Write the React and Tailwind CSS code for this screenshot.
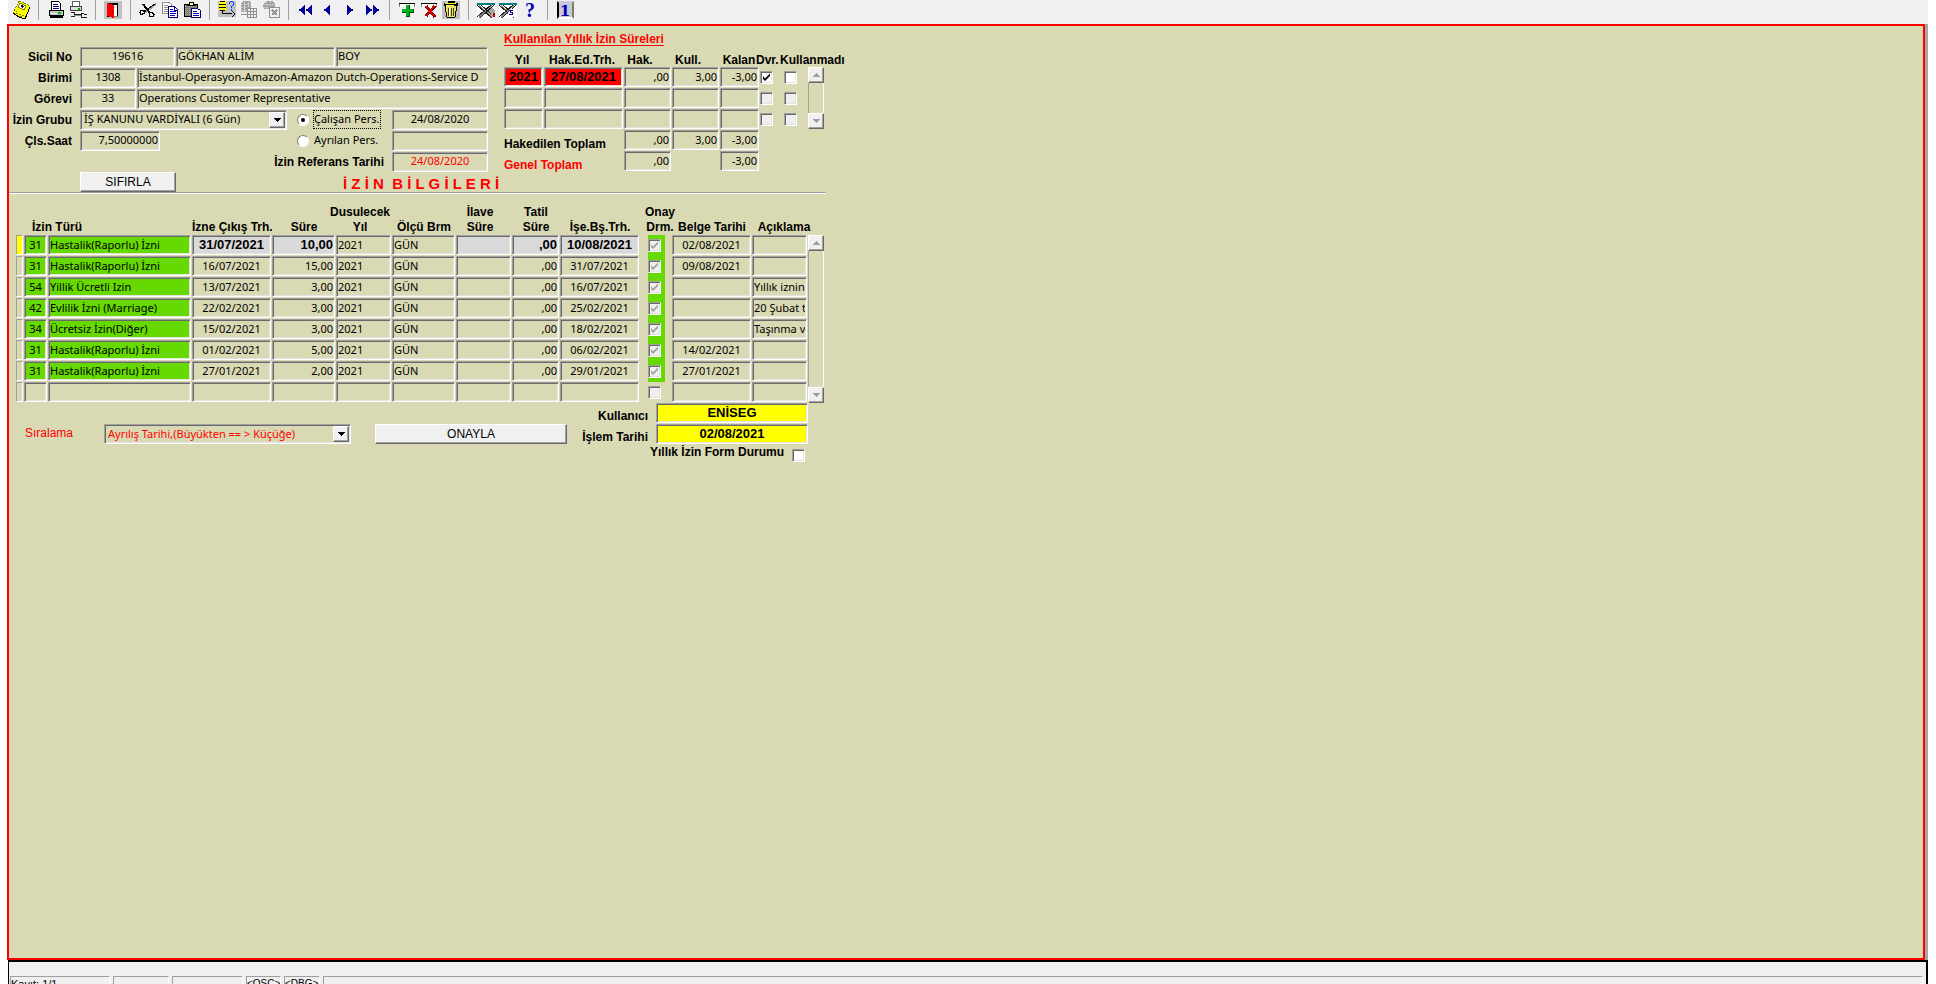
import React from "react";

const SUNKEN =
  "border border-t-[#a0a0a0] border-l-[#a0a0a0] border-r-white border-b-white shadow-[inset_1px_1px_0_#696969,inset_-1px_-1px_0_#e3e3e3]";
const RAISED =
  "border border-t-white border-l-white border-r-[#696969] border-b-[#696969] shadow-[inset_-1px_-1px_0_#a0a0a0] bg-[#f0f0f0]";
const BODY = "font-['Noto_Sans','Open_Sans',sans-serif] text-[11px] font-normal";
const STRONG = "font-['Liberation_Sans',Arial,sans-serif] text-[13px] font-bold";

const leaves = [
  ["31", "Hastalik(Raporlu) İzni", "31/07/2021", "10,00", "2021", "GÜN", ",00", "10/08/2021", "02/08/2021", ""],
  ["31", "Hastalik(Raporlu) İzni", "16/07/2021", "15,00", "2021", "GÜN", ",00", "31/07/2021", "09/08/2021", ""],
  ["54", "Yillik Ücretli Izin", "13/07/2021", "3,00", "2021", "GÜN", ",00", "16/07/2021", "", "Yıllık iznin"],
  ["42", "Evlilik İzni (Marriage)", "22/02/2021", "3,00", "2021", "GÜN", ",00", "25/02/2021", "", "20 Şubat t"],
  ["34", "Ücretsiz İzin(Diğer)", "15/02/2021", "3,00", "2021", "GÜN", ",00", "18/02/2021", "", "Taşınma v"],
  ["31", "Hastalik(Raporlu) İzni", "01/02/2021", "5,00", "2021", "GÜN", ",00", "06/02/2021", "14/02/2021", ""],
  ["31", "Hastalik(Raporlu) İzni", "27/01/2021", "2,00", "2021", "GÜN", ",00", "29/01/2021", "27/01/2021", ""],
  ["", "", "", "", "", "", "", "", "", ""],
];

function Field({ label, id, value = "", align = "text-left", bg = "bg-transparent", color = "text-black", strong = false, width = "w-full" }) {
  return (
    <input
      id={id}
      aria-label={id ? undefined : label}
      readOnly
      value={value}
      className={`block h-5 min-w-0 rounded-none px-px pb-0.5 outline-none ${SUNKEN} ${strong ? STRONG : BODY} ${align} ${bg} ${color} ${width}`}
    />
  );
}

function Check({ label, id, checked = false, disabled = false }) {
  return (
    <span className="grid size-[13px]">
      <input
        id={id}
        type="checkbox"
        aria-label={id ? undefined : label}
        defaultChecked={checked}
        disabled={disabled}
        className={`peer size-[13px] appearance-none bg-white disabled:bg-[#f0f0f0] [grid-area:1/1] ${SUNKEN}`}
      />
      <svg
        viewBox="0 0 13 13"
        className="pointer-events-none hidden size-[13px] text-black [grid-area:1/1] peer-checked:block peer-disabled:text-[#a0a0a0]"
      >
        <path d="M3 5v3l2 2 5-5V2.500L5 7.500z" fill="currentColor" />
      </svg>
    </span>
  );
}

function Radio({ id, checked }) {
  return (
    <span className="grid size-3 place-items-center">
      <input
        id={id}
        type="radio"
        name="durum"
        defaultChecked={checked}
        className="peer size-3 appearance-none rounded-full border border-t-[#808080] border-r-white border-b-white border-l-[#808080] bg-white [grid-area:1/1]"
      />
      <span className="pointer-events-none hidden size-1 rounded-full bg-black [grid-area:1/1] peer-checked:block" />
    </span>
  );
}

function Select({ id, value, width, color }) {
  return (
    <span className={`grid h-5 ${width} ${SUNKEN}`}>
      <select id={id} className={`h-[18px] appearance-none bg-transparent pl-[3px] outline-none [grid-area:1/1] ${BODY} ${color}`}>
        <option>{value}</option>
      </select>
      <span className={`pointer-events-none mr-px mt-px grid h-4 w-4 place-items-center justify-self-end [grid-area:1/1] ${RAISED}`}>
        <svg viewBox="0 0 7 4" className="h-1 w-[7px]" shapeRendering="crispEdges">
          <path d="M0 0h7v1H0zM1 1h5v1H1zM2 2h3v1H2zM3 3h1v1H3z" />
        </svg>
      </span>
    </span>
  );
}

function Scroll({ height, name }) {
  return (
    <div className={`flex w-4 flex-col justify-between border-l border-r border-l-[#a0a0a0] border-r-white ${height}`}>
      <button aria-label={`${name} yukarı`} className={`-mx-px grid h-4 place-items-center ${RAISED}`}>
        <svg viewBox="0 0 7 4" className="h-1 w-[7px]" shapeRendering="crispEdges" fill="#a0a0a0">
          <path d="M3 0h1v1H3zM2 1h3v1H2zM1 2h5v1H1zM0 3h7v1H0z" />
        </svg>
      </button>
      <button aria-label={`${name} aşağı`} className={`-mx-px grid h-4 place-items-center ${RAISED}`}>
        <svg viewBox="0 0 7 4" className="h-1 w-[7px]" shapeRendering="crispEdges" fill="#a0a0a0">
          <path d="M0 0h7v1H0zM1 1h5v1H1zM2 2h3v1H2zM3 3h1v1H3z" />
        </svg>
      </button>
    </div>
  );
}

const icons = {
  note: (
    <>
      <path d="M8 1l9 4 2 2-5 12-6-2-6-4z" fill="#ffff00" />
      <path d="M8 1l9 4 2 2M8 1L2 13" stroke="#808000" strokeDasharray="2 1" />
      <path d="M9 3l6 3-2 4-6-3z" fill="#fff" stroke="#808000" />
      <path d="M10 5l3 1-1 2-2-1z" fill="#000" />
      <path d="M5 13h2M8 14h2M8 16h3M11 15h2M5 11h1" stroke="#808000" />
      <path d="M2 13l6 4 6 2 5-12" fill="none" stroke="#000" />
    </>
  ),
  printer: (
    <>
      <path d="M5.500 1.500h7l2 2v7h-9z" fill="#fff" stroke="#000" />
      <path d="M7 4.500h5M7 6.500h6M7 8.500h6" stroke="#000080" />
      <path d="M3.500 10.500h14v5h-14z" fill="#c0c0c0" stroke="#000" />
      <path d="M4 17h13" stroke="#000" strokeWidth="2" />
      <path d="M5 13.500h6" stroke="#fff" />
      <path d="M12 13h3" stroke="#00c000" strokeWidth="2" />
    </>
  ),
  printerSetup: (
    <>
      <path d="M4.500 1.500h7v5h-7z" fill="#fff" stroke="#606060" />
      <path d="M2.500 6.500h11v4h-11z" fill="#e0e0e0" stroke="#404040" />
      <path d="M10 9h2" stroke="#00a000" strokeWidth="2" />
      <path d="M3 12h3v2h7v-1h2v1M3 16.500h4M13 15v2h6M19 14h-3" stroke="#202020" />
      <path d="M6 15h7v1H6z" fill="#909090" />
    </>
  ),
  door: (
    <>
      <path d="M1 1h18v18H1z" fill="#c0c0c0" />
      <path d="M4 3h11v14H4z" fill="#000" />
      <path d="M10 5h4v11h-4z" fill="#fff" />
      <path d="M4 3l7 2v13l-7-2z" fill="#ff0000" />
      <path d="M9 10h1v3H9z" fill="#800000" />
      <path d="M11 16h4v1h-4z" fill="#808080" />
    </>
  ),
  cut: (
    <>
      <path d="M18 4L8 12" stroke="#a0a0a0" strokeWidth="2" />
      <path d="M5 4l7 9" stroke="#000" strokeWidth="2" />
      <path d="M17 4L5 12" stroke="#000" />
      <path d="M3 10.500h3l1 1-1 2-3 1-1-2zM11 12.500h3l2 2-1 2h-3l-1-2z" fill="none" stroke="#000" />
    </>
  ),
  copy: (
    <>
      <path d="M2.500 2.500h7l2 2v9h-9z" fill="#fff" stroke="#909090" />
      <path d="M4 5.500h4M4 7.500h4M4 9.500h4M4 11.500h4" stroke="#909090" />
      <path d="M8.500 6.500h6l3 3v8h-9z" fill="#fff" stroke="#000080" />
      <path d="M10 9.500h3M10 11.500h6M10 13.500h6M10 15.500h5" stroke="#0000c0" />
      <path d="M14.500 7v3h3" fill="none" stroke="#000080" />
    </>
  ),
  paste: (
    <>
      <path d="M2.500 4.500h13v12h-13z" fill="#808070" stroke="#000" />
      <path d="M3 6.500h12M3 8.500h12M3 10.500h12M3 12.500h12M3 14.500h12" stroke="#b0b0a0" strokeDasharray="1 1" />
      <path d="M5 5.500V4h2V2h4v2h2v1.500z" fill="#ffff80" stroke="#000" />
      <path d="M9.500 8.500h6l3 2v7h-9z" fill="#fff" stroke="#000080" />
      <path d="M11 11.500h4M11 13.500h6M11 15.500h6" stroke="#0000c0" />
    </>
  ),
  query: (
    <>
      <path d="M1 1h18v16H1z" fill="#c0c0c0" />
      <path d="M2 2l1-1h5l1 1v8l-1 1H3l-1-1z" fill="#ffff00" />
      <path d="M3 1.500h5M2 4.500h7M2 7.500h7M3 10.500h5" stroke="#000" />
      <path d="M5 11v2.500h10M15 11l3 3-3 3" fill="none" stroke="#000" />
      <path d="M12.500 4V2.500l1-1h2l1 1v2l-2 2V8M14.500 9v1.500" fill="none" stroke="#0040ff" />
    </>
  ),
  grid: (
    <>
      <path d="M2 3l2-2h6l2 2v9H2z" fill="#a0a0a0" />
      <path d="M2 4.500h10M2 7.500h6M2 10.500h6M5.500 2v10M9.500 2v5" stroke="#d0d0d0" strokeDasharray="2 1" />
      <path d="M8.500 8.500h9v9h-9z" fill="#f0f0f0" stroke="#909090" />
      <path d="M9 11.500h9M9 14.500h9M11.500 9v8M14.500 9v8M2 14.500h6" stroke="#909090" />
    </>
  ),
  gridCancel: (
    <>
      <path d="M2 4l3-3h6l3 3v5H3z" fill="#a0a0a0" />
      <path d="M2 4.500h12M2 7.500h6M5.500 1v8M9.500 1v5" stroke="#d0d0d0" strokeDasharray="2 1" />
      <path d="M8.500 7.500h10v10h-10z" fill="#f0f0f0" stroke="#909090" />
      <path d="M11 10l5 5M16 10l-5 5" stroke="#909090" strokeWidth="2" />
    </>
  ),
  first: (
    <g fill="#000099" transform="translate(3 5)">
      <path d="M6 0v10L1 6H0V4h1z" />
      <path d="M13 0v10L8 6H7V4h1z" />
    </g>
  ),
  prev: <path d="M6 0v10L1 6H0V4h1z" transform="translate(6 5)" fill="#000099" />,
  next: <path d="M0 0v10l5-4h1V4H5z" transform="translate(7 5)" fill="#000099" />,
  last: (
    <g fill="#000099" transform="translate(4 5)">
      <path d="M0 0v10l5-4h1V4H5z" />
      <path d="M7 0v10l5-4h1V4h-1z" />
    </g>
  ),
  add: (
    <>
      <path d="M2.500 6.500v-3h15v3" fill="#fff" stroke="#808080" />
      <path d="M2 3.500h16" stroke="#000" />
      <path d="M9 5h4v4h4v4h-4v4H9v-4H5V9h4z" fill="#005000" />
      <path d="M9 5h3v4h4v3h-4v4H9v-4H5V9h4z" fill="#00b020" />
    </>
  ),
  remove: (
    <>
      <path d="M2.500 6.500v-3h15v3" fill="#fff" stroke="#808080" />
      <path d="M2 3.500h16" stroke="#000" />
      <path d="M7 6l9 11M16 6L7 16" stroke="#600000" strokeWidth="3" />
      <path d="M7 6l8 10M15 6L7 16" stroke="#e00000" strokeWidth="2" />
    </>
  ),
  trash: (
    <>
      <path d="M1 1h18v18H1z" fill="#c0c0c0" />
      <path d="M4 6h12l-1 11-2 1H7l-2-1z" fill="#e8e060" />
      <path d="M4.500 6l1 11M15.500 6l-1 11M6 17.500h8" stroke="#000" />
      <path d="M7.500 8v8M10.500 8v8M12.500 8v8" stroke="#404000" />
      <path d="M8.500 8v8" stroke="#fff" />
      <path d="M3 3h14v3H3z" fill="#000" />
      <path d="M4 3h11v1H4z" fill="#ffff00" />
      <path d="M7 1.500h6v1H7z" fill="#ffff80" stroke="#000" />
      <path d="M5 5h8v1H5z" fill="#ffff80" />
    </>
  ),
  mail: (
    <>
      <path d="M1 3h18v2H1z" fill="#008080" />
      <path d="M1 5h18v13H1z" fill="#fff" />
      <path d="M10 7h6l3 4v5l-4 2-5-5z" fill="#a8a8a8" />
      <path d="M3 6l12 11M16 5L3 17" stroke="#909090" strokeWidth="2" />
      <path d="M1 5l15 13M5 5l10 9M15 5L1 17M18 5L4 18" stroke="#202020" />
      <path d="M17 13h2v4h-2z" fill="#c00000" />
    </>
  ),
  mailSend: (
    <>
      <path d="M1 3h18v2H1z" fill="#008080" />
      <path d="M1 5h18v13H1z" fill="#fff" />
      <path d="M3 6l8 7M16 5L3 17" stroke="#909090" strokeWidth="2" />
      <path d="M1 5l15 13M5 5l8 7M15 5L1 17M18 5L4 18" stroke="#202020" />
      <path d="M13 8l6 5-4 5-6-3z" fill="#fff" />
      <path d="M15 10.500h-3v2h2v2h-3" fill="none" stroke="#0000a0" />
    </>
  ),
};

const groups = [
  [["Kaydet", "note"]],
  [["Yazdır", "printer"], ["Yazıcı Ayarları", "printerSetup"]],
  [["Çıkış", "door"]],
  [["Kes", "cut"], ["Kopyala", "copy"], ["Yapıştır", "paste"]],
  [["Sorgu", "query"], ["Sorguyu Çalıştır", "grid"], ["Sorguyu İptal Et", "gridCancel"]],
  [["İlk", "first"], ["Önceki", "prev"], ["Sonraki", "next"], ["Son", "last"]],
  [["Ekle", "add"], ["Çıkar", "remove"], ["Temizle", "trash"]],
  [["Düzenle", "mail"], ["Gönder", "mailSend"], ["Yardım", "?"]],
  [["Pencere", "1"]],
];

function ToolIcon({ name }) {
  if (name === "?")
    return <span className="font-['Liberation_Serif',serif] text-[20px] leading-5 font-bold text-[#0000b0]">?</span>;
  if (name === "1")
    return (
      <span className="grid h-[18px] w-[17px] place-items-center border-2 border-t-[#c8c8d8] border-r-[#808060] border-b-white border-l-black bg-[#c8c8d8] font-['DejaVu_Serif',serif] text-[15px] leading-4 font-bold text-[#0000b0]">
        1
      </span>
    );
  return (
    <svg viewBox="0 0 20 20" className="size-5" fill="none" shapeRendering="crispEdges">
      {icons[name]}
    </svg>
  );
}

function Toolbar() {
  return (
    <div className="ml-2 flex h-6 shrink-0 bg-[#f0f0f0] pl-0.5">
      {groups.map((group, i) => (
        <React.Fragment key={i}>
          {i > 0 && (
            <div className="flex h-5 w-[13px] justify-center">
              <span className="w-px bg-[#a0a0a0]" />
            </div>
          )}
          {group.map(([label, icon]) => (
            <button key={label} aria-label={label} className="grid h-5 w-[22px] place-items-center">
              <ToolIcon name={icon} />
            </button>
          ))}
        </React.Fragment>
      ))}
    </div>
  );
}

function Person() {
  const label = "w-[63px] shrink-0 text-right whitespace-nowrap";
  return (
    <div className="w-[479px] pt-5">
      <div className="flex h-[21px] items-center gap-2">
        <label htmlFor="sicil" className={label}>Sicil No</label>
        <div className="flex min-w-0 flex-1 gap-px">
          <Field id="sicil" value="19616" align="text-center" width="w-[95px]" />
          <Field label="Adı" value="GÖKHAN ALİM" width="w-[159px]" />
          <Field label="Soyadı" value="BOY" width="flex-1" />
        </div>
      </div>
      <div className="flex h-[21px] items-center gap-2">
        <label htmlFor="birim" className={label}>Birimi</label>
        <div className="flex min-w-0 flex-1 gap-px">
          <Field id="birim" value="1308" align="text-center" width="w-14" />
          <Field label="Birim Adı" value="İstanbul-Operasyon-Amazon-Amazon Dutch-Operations-Service D" width="flex-1" />
        </div>
      </div>
      <div className="flex h-[21px] items-center gap-2">
        <label htmlFor="gorev" className={label}>Görevi</label>
        <div className="flex min-w-0 flex-1 gap-px">
          <Field id="gorev" value="33" align="text-center" width="w-14" />
          <Field label="Görev Adı" value="Operations Customer Representative" width="flex-1" />
        </div>
      </div>
      <div className="flex h-[21px] items-center gap-2">
        <label htmlFor="grup" className={label}>İzin Grubu</label>
        <div className="flex flex-1 items-center">
          <Select id="grup" value="İŞ KANUNU VARDİYALI (6 Gün)" width="w-[207px]" color="text-black" />
          <div className="ml-2.5 flex w-[95px] items-center gap-1">
            <Radio id="calisan" checked />
            <label htmlFor="calisan" className={`border border-dotted border-black whitespace-nowrap ${BODY}`}>Çalışan Pers.</label>
          </div>
          <Field label="Çalışan Tarihi" value="24/08/2020" align="text-center" width="w-24" />
        </div>
      </div>
      <div className="flex h-[21px] items-center gap-2">
        <label htmlFor="saat" className={label}>Çls.Saat</label>
        <div className="flex flex-1 items-center">
          <Field id="saat" value="7,50000000" align="text-right" width="w-20" />
          <div className="ml-[137px] flex w-[95px] items-center gap-1">
            <Radio id="ayrilan" />
            <label htmlFor="ayrilan" className={`border border-transparent whitespace-nowrap ${BODY}`}>Ayrılan Pers.</label>
          </div>
          <Field label="Ayrılan Tarihi" width="w-24" />
        </div>
      </div>
      <div className="flex h-[21px] items-center justify-end gap-2">
        <label htmlFor="referans">İzin Referans Tarihi</label>
        <Field id="referans" value="24/08/2020" align="text-center" color="text-[#ff0000]" width="w-24" />
      </div>
      <div className="flex h-5 items-center pl-[71px]">
        <button className={`h-5 w-24 shrink-0 text-[12px] font-normal ${RAISED}`}>SIFIRLA</button>
        <h1 className="ml-[167px] pt-1 text-[15px] leading-4 font-bold whitespace-pre text-[#ff0000]">İ Z İ N  B İ L G İ L E R İ</h1>
      </div>
    </div>
  );
}

function Usage() {
  const rows = [
    ["2021", "27/08/2021", ",00", "3,00", "-3,00"],
    ["", "", "", "", ""],
    ["", "", "", "", ""],
  ];
  const cell = "p-0 pr-px pb-px";
  return (
    <div className="pt-1.5">
      <h2 className="h-[21px] leading-[15px] font-bold text-[#ff0000] underline underline-offset-2">Kullanılan Yıllık İzin Süreleri</h2>
      <div className="flex items-start">
        <table className="w-[304px] table-fixed border-separate border-spacing-0">
          <colgroup>
            <col className="w-10" />
            <col className="w-20" />
            <col className="w-12" />
            <col className="w-12" />
            <col className="w-10" />
            <col className="w-6" />
            <col className="w-6" />
          </colgroup>
          <thead>
            <tr className="h-[14px] leading-[14px] whitespace-nowrap">
              <th className="p-0 pr-1">Yıl</th>
              <th className="p-0 pr-1">Hak.Ed.Trh.</th>
              <th className="p-0 pr-4">Hak.</th>
              <th className="p-0 pr-4">Kull.</th>
              <th className="p-0 pr-0.5">Kalan</th>
              <th className="p-0"><div className="-ml-1 text-left">Dvr.</div></th>
              <th className="p-0"><div className="-ml-1 text-left">Kullanmadı</div></th>
            </tr>
          </thead>
          <tbody>
            {rows.map((r, i) => (
              <tr key={i} className="h-[21px]">
                <td className={cell}><Field label="Yıl" value={r[0]} align="text-center" strong={i === 0} bg={i === 0 ? "bg-[#ff0000]" : "bg-transparent"} /></td>
                <td className={cell}><Field label="Hak Ediş Tarihi" value={r[1]} align="text-center" strong={i === 0} bg={i === 0 ? "bg-[#ff0000]" : "bg-transparent"} /></td>
                <td className={cell}><Field label="Hak" value={r[2]} align="text-right" /></td>
                <td className={cell}><Field label="Kullanılan" value={r[3]} align="text-right" /></td>
                <td className={cell}><Field label="Kalan" value={r[4]} align="text-right" /></td>
                <td className="p-0"><Check label="Devir" checked={i === 0} disabled={i > 0} /></td>
                <td className="p-0"><Check label="Kullanmadı" disabled={i > 0} /></td>
              </tr>
            ))}
          </tbody>
          <tfoot>
            <tr className="h-[21px]">
              <th colSpan={2} className="p-0 text-left align-bottom leading-[14px]">Hakedilen Toplam</th>
              <td className={cell}><Field label="Hak toplamı" value=",00" align="text-right" /></td>
              <td className={cell}><Field label="Kullanılan toplamı" value="3,00" align="text-right" /></td>
              <td className={cell}><Field label="Kalan toplamı" value="-3,00" align="text-right" /></td>
            </tr>
            <tr className="h-[21px]">
              <th colSpan={2} className="p-0 text-left align-bottom leading-[14px] text-[#ff0000]">Genel Toplam</th>
              <td className={cell}><Field label="Genel hak" value=",00" align="text-right" /></td>
              <td />
              <td className={cell}><Field label="Genel kalan" value="-3,00" align="text-right" /></td>
            </tr>
          </tfoot>
        </table>
        <div className="pt-[14px]">
          <Scroll height="h-[62px]" name="Yıllık izin" />
        </div>
      </div>
    </div>
  );
}

function Leaves() {
  const cell = "p-0 pr-px pb-px";
  const head = "p-0 align-bottom";
  return (
    <div className="flex items-end pt-[11px] pl-[7px]">
      <table className="w-[792px] table-fixed border-separate border-spacing-0">
        <colgroup>
          <col className="w-2" />
          <col className="w-6" />
          <col className="w-36" />
          <col className="w-20" />
          <col className="w-16" />
          <col className="w-14" />
          <col className="w-16" />
          <col className="w-14" />
          <col className="w-12" />
          <col className="w-20" />
          <col className="w-2" />
          <col className="w-6" />
          <col className="w-20" />
          <col className="w-14" />
        </colgroup>
        <thead>
          <tr className="h-[30px] leading-[15px] whitespace-nowrap">
            <th colSpan={3} className="p-0 pl-4 text-left align-bottom">İzin Türü</th>
            <th className={head}>İzne Çıkış Trh.</th>
            <th className={head}>Süre</th>
            <th className={head}><div className="-ml-2">Dusulecek<br />Yıl</div></th>
            <th className={head}>Ölçü Brm</th>
            <th className={`${head} pr-2`}>İlave<br />Süre</th>
            <th className={head}>Tatil<br />Süre</th>
            <th className={head}>İşe.Bş.Trh.</th>
            <th className="p-0" />
            <th className={head}><div className="-mx-1">Onay<br />Drm.</div></th>
            <th className={head}>Belge Tarihi</th>
            <th className={head}><div className="-mr-2">Açıklama</div></th>
          </tr>
        </thead>
        <tbody>
          {leaves.map((r, i) => {
            const cur = i === 0;
            const filled = r[0] !== "";
            const green = filled ? "bg-[#66d900]" : "bg-transparent";
            const gray = cur ? "bg-[#d9d9d9]" : "bg-transparent";
            return (
              <tr key={i} className="h-[21px]">
                <td className={cell}>
                  <div className={`h-5 border border-t-[#a0a0a0] border-r-white border-b-white border-l-[#a0a0a0] ${cur ? "bg-[#ffff00]" : ""}`} />
                </td>
                <td className={cell}><Field label="Kod" value={r[0]} align="text-center" bg={green} /></td>
                <td className={cell}><Field label="İzin Türü" value={r[1]} bg={green} /></td>
                <td className={cell}><Field label="İzne Çıkış Tarihi" value={r[2]} align="text-center" strong={cur} bg={gray} /></td>
                <td className={cell}><Field label="Süre" value={r[3]} align="text-right" strong={cur} bg={gray} /></td>
                <td className={cell}><Field label="Düşülecek Yıl" value={r[4]} /></td>
                <td className={cell}><Field label="Ölçü Birimi" value={r[5]} /></td>
                <td className={cell}><Field label="İlave Süre" bg={gray} /></td>
                <td className={cell}><Field label="Tatil Süre" value={r[6]} align="text-right" strong={cur} bg={gray} /></td>
                <td className={cell}><Field label="İşe Başlama Tarihi" value={r[7]} align="text-center" strong={cur} bg={gray} /></td>
                <td className="p-0" />
                <td className="p-0 pr-2">
                  <div className={`-mr-px flex h-[21px] items-center ${green}`}><Check label="Onay" checked={filled} disabled /></div>
                </td>
                <td className={cell}><Field label="Belge Tarihi" value={r[8]} align="text-center" /></td>
                <td className={cell}><Field label="Açıklama" value={r[9]} /></td>
              </tr>
            );
          })}
        </tbody>
      </table>
      <Scroll height="h-[168px]" name="İzinler" />
    </div>
  );
}

function Actions() {
  return (
    <div className="flex items-start pl-4">
      <div className="flex items-center pt-[21px]">
        <label htmlFor="sirala" className="w-[79px] pb-0.5 text-[12px] leading-4 font-normal text-[#ff0000]">Sıralama</label>
        <Select id="sirala" value="Ayrılış Tarihi,(Büyükten == > Küçüğe)" width="w-[247px]" color="text-[#ff0000]" />
        <button className={`ml-6 h-5 w-48 text-[12px] font-normal ${RAISED}`}>ONAYLA</button>
      </div>
      <div className="grid w-[241px] grid-cols-[81px_152px] items-center gap-x-2">
        <label htmlFor="kullanici" className="pt-1 text-right leading-4">Kullanıcı</label>
        <div className="h-[21px]"><Field id="kullanici" value="ENİSEG" align="text-center" strong bg="bg-[#ffff00]" /></div>
        <label htmlFor="islem" className="pt-1 text-right leading-4">İşlem Tarihi</label>
        <div className="h-[21px]"><Field id="islem" value="02/08/2021" align="text-center" strong bg="bg-[#ffff00]" /></div>
        <div className="col-span-2 flex items-start justify-end gap-2 pr-[3px]">
          <label htmlFor="form" className="leading-[14px] whitespace-nowrap">Yıllık İzin Form Durumu</label>
          <div className="pt-1"><Check id="form" /></div>
        </div>
      </div>
    </div>
  );
}

function StatusBar() {
  const panel = "h-5 overflow-hidden border-t border-l border-t-[#a0a0a0] border-l-[#a0a0a0] border-r border-r-white";
  return (
    <footer className="ml-2 h-6 shrink-0 overflow-hidden border-t-2 border-r-2 border-l border-black bg-[#f0f0f0] text-[11px] leading-[14px]">
      <div className="flex gap-[3px] pt-[14px] pr-[3px] pl-px">
        <div className={`w-[100px] ${panel}`}>Kayıt: 1/1</div>
        <div className={`w-14 ${panel}`} />
        <div className={`w-[71px] ${panel}`} />
        <div className={`w-[35px] text-[10px] ${panel}`}>&lt;OSC&gt;</div>
        <div className={`w-9 text-[10px] ${panel}`}>&lt;DBG&gt;</div>
        <div className={`flex-1 ${panel}`} />
      </div>
    </footer>
  );
}

export default function App() {
  return (
    <div className="flex h-screen flex-col overflow-hidden bg-white pr-2 font-['Liberation_Sans',Arial,sans-serif] text-[12px] text-black">
      <Toolbar />
      <div className="ml-[7px] flex min-h-0 flex-1 border-r-[3px] border-[#a7a6aa]">
        <main className="flex-1 border-2 border-[#ff0000] bg-[#d9d9b3] font-bold">
          <div className="flex items-start gap-4">
            <Person />
            <Usage />
          </div>
          <hr className="h-0.5 w-[817px] border-t border-b border-t-[#a0a0a0] border-b-white" />
          <Leaves />
          <Actions />
        </main>
      </div>
      <StatusBar />
    </div>
  );
}
